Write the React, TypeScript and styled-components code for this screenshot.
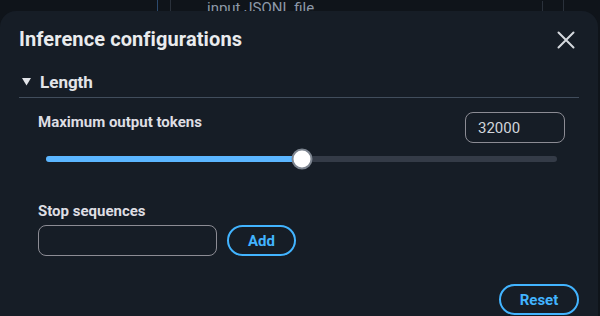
import React from "react";
import styled, { createGlobalStyle } from "styled-components";

const Global = createGlobalStyle`
  html, body { margin: 0; padding: 0; background: #0f141a; }
  body { width: 600px; height: 316px; overflow: hidden; font-family: Roboto, "Noto Sans", sans-serif; }
  * { box-sizing: border-box; }
`;

const Root = styled.div`
  position: relative;
  width: 600px;
  height: 316px;
  overflow: hidden;
`;

const PageBehind = styled.div`
  position: absolute;
  inset: 0;
  display: flex;
  background: #0f141a;
`;

const SideCol = styled.div<{ $w: number; $line: string }>`
  width: ${(p) => p.$w}px;
  flex: none;
  border-right: 1px solid ${(p) => p.$line};
`;

const MainCol = styled.div`
  flex: 1;
  padding: 0 0 0 36px;
  border-right: 1px solid #2a313b;
  font-size: 15px;
  color: #8d99a8;
  line-height: 1;
  position: relative;
  top: 1px;
`;

const Modal = styled.div`
  position: relative;
  z-index: 1;
  margin-top: 11px;
  width: 598px;
  height: 320px;
  background: #161d26;
  border-radius: 16px 16px 0 0;
  padding: 0 19px;
  color: #e9ebed;
`;

const Header = styled.div`
  display: flex;
  align-items: center;
  justify-content: space-between;
  height: 51px;
  padding-top: 4px;
`;

const Title = styled.h2`
  margin: 0;
  font-size: 20px;
  font-weight: 700;
  letter-spacing: 0.1px;
  color: #e9ebed;
`;

const CloseButton = styled.button`
  background: none;
  border: none;
  padding: 0;
  margin: 2px 4px 0 0;
  display: flex;
  cursor: pointer;
`;

const SectionHeader = styled.div`
  display: flex;
  align-items: center;
  gap: 9px;
  height: 36px;
  padding: 5px 0 0 3px;
  border-bottom: 1px solid #414d5c;
  font-size: 17px;
  font-weight: 700;
  color: #e2e4e8;
`;

const SectionBody = styled.div`
  padding: 14px 14px 0 19px;
  display: flex;
  flex-direction: column;
`;

const FieldRow = styled.div`
  display: flex;
  justify-content: space-between;
  align-items: flex-start;
`;

const Label = styled.div`
  font-size: 15px;
  font-weight: 700;
  color: #dedee3;
  line-height: 18px;
  padding-top: 1px;
`;

const Input = styled.div<{ $w: number }>`
  width: ${(p) => p.$w}px;
  height: 31px;
  border: 1px solid #8c8c94;
  border-radius: 8px;
  padding: 0 12px;
  display: flex;
  align-items: center;
  font-size: 15px;
  color: #d1d5db;
`;

const SliderWrap = styled.div`
  position: relative;
  margin: 11px 8px 0 8px;
  height: 10px;
  display: flex;
  align-items: center;
`;

const Track = styled.div`
  position: relative;
  flex: 1;
  height: 6px;
  border-radius: 3px;
  background: #343b47;
`;

const Fill = styled.div`
  height: 100%;
  border-radius: 3px;
  background: #5bb6ff;
`;

const Thumb = styled.div`
  position: absolute;
  top: 50%;
  width: 21px;
  height: 21px;
  border-radius: 50%;
  background: #ffffff;
  border: 2px solid #7d8590;
  transform: translate(-50%, -50%);
`;

const StopLabel = styled(Label)`
  margin-top: 38px;
  padding-top: 0;
`;

const InputRow = styled.div`
  display: flex;
  gap: 10px;
  margin-top: 5px;
`;

const PillButton = styled.button<{ $w: number }>`
  width: ${(p) => p.$w}px;
  height: 31px;
  border: 2px solid #42b4ff;
  border-radius: 16px;
  background: transparent;
  color: #42b4ff;
  font-family: Roboto, "Noto Sans", sans-serif;
  font-size: 15px;
  font-weight: 700;
  padding: 0;
  cursor: pointer;
`;

const Footer = styled.div`
  display: flex;
  justify-content: flex-end;
  margin-top: 28px;
`;

export default function App() {
  const value = 32000;
  const max = 64000;
  const pct = (value / max) * 100;
  return (
    <Root>
      <Global />
      <PageBehind>
        <SideCol $w={158} $line="#2c4a6e" />
        <SideCol $w={13} $line="#2a313b" />
        <MainCol>input JSONL file</MainCol>
        <SideCol $w={21} $line="#2a313b" />
        <SideCol $w={36} $line="transparent" />
      </PageBehind>
      <Modal>
        <Header>
          <Title>Inference configurations</Title>
          <CloseButton aria-label="Close">
            <svg width="18" height="18" viewBox="0 0 18 18">
              <path d="M1.5 1.5 L16.5 16.5 M16.5 1.5 L1.5 16.5" stroke="#d5d9de" strokeWidth="2" strokeLinecap="round" fill="none" />
            </svg>
          </CloseButton>
        </Header>
        <SectionHeader>
          <svg width="9" height="8" viewBox="0 0 9 8">
            <path d="M0 0 H9 L4.5 7.5 Z" fill="#e2e4e8" />
          </svg>
          Length
        </SectionHeader>
        <SectionBody>
          <FieldRow>
            <Label>Maximum output tokens</Label>
            <Input $w={100}>32000</Input>
          </FieldRow>
          <SliderWrap>
            <Track>
              <Fill style={{ width: `${pct}%` }} />
              <Thumb style={{ left: `${pct}%` }} />
            </Track>
          </SliderWrap>
          <StopLabel>Stop sequences</StopLabel>
          <InputRow>
            <Input $w={179} />
            <PillButton $w={69}>Add</PillButton>
          </InputRow>
        </SectionBody>
        <Footer>
          <PillButton $w={80}>Reset</PillButton>
        </Footer>
      </Modal>
    </Root>
  );
}
